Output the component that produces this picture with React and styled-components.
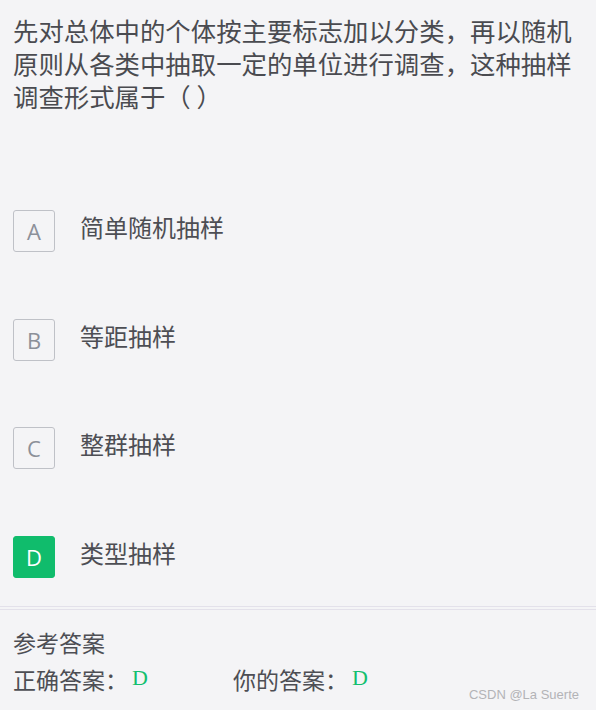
import styled, { createGlobalStyle } from "styled-components";

const GlobalStyle = createGlobalStyle`
  html, body {
    margin: 0;
    padding: 0;
    background: #f4f4f6;
  }
  body {
    font-family: "Noto Sans CJK SC", "Noto Sans", sans-serif;
  }
`;

const Page = styled.div`
  position: relative;
  width: 596px;
  height: 710px;
  background: #f4f4f6;
  overflow: hidden;
`;

const Question = styled.div`
  padding: 14px 13px 0 13px;
  font-size: 25.4px;
  line-height: 33px;
  color: #4a4b50;
`;

const Options = styled.div`
  display: flex;
  flex-direction: column;
  gap: 66.7px;
  padding: 97px 0 0 13px;
`;

const Option = styled.div`
  display: flex;
  align-items: center;
  height: 42px;
  gap: 25px;
`;

const Letter = styled.div`
  box-sizing: border-box;
  width: 42px;
  height: 42px;
  display: flex;
  align-items: center;
  justify-content: center;
  border-radius: 3px;
  border: 1px solid ${(p) => (p.$selected ? "#10bc6c" : "#bfc1c7")};
  background: ${(p) => (p.$selected ? "#10bc6c" : "transparent")};
  color: ${(p) => (p.$selected ? "#ffffff" : "#8c9099")};
  font-family: "Open Sans", "Noto Sans", sans-serif;
  font-size: 22px;
  line-height: 1;
`;

const OptionText = styled.div`
  font-size: 24px;
  line-height: 32px;
  padding-bottom: 8px;
  color: #4d4e54;
`;

const Divider = styled.div`
  margin-top: 28px;
  height: 2px;
  border-top: 1px solid #e3e1ea;
  border-bottom: 1px solid #e3e1ea;
`;

const Footer = styled.div`
  padding: 14px 13px 0 13px;
  color: #4d4e54;
`;

const FooterTitle = styled.div`
  font-size: 23px;
  line-height: 37px;
`;

const AnswerRow = styled.div`
  display: flex;
  font-size: 23px;
  line-height: 37px;
`;

const AnswerItem = styled.div`
  width: 220px;
  display: flex;
  align-items: baseline;
`;

const AnswerValue = styled.span`
  margin-left: 4px;
  font-family: "Liberation Serif", serif;
  font-size: 22px;
  color: #12bf6f;
  position: relative;
  top: -4px;
`;

const Watermark = styled.div`
  position: absolute;
  right: 17px;
  bottom: 8px;
  font-family: "Liberation Sans", Arial, sans-serif;
  font-size: 13px;
  color: #b3b3b6;
`;

const options = [
  { key: "A", text: "简单随机抽样" },
  { key: "B", text: "等距抽样" },
  { key: "C", text: "整群抽样" },
  { key: "D", text: "类型抽样", selected: true },
];

export default function App() {
  return (
    <Page>
      <GlobalStyle />
      <Question>
        先对总体中的个体按主要标志加以分类，再以随机原则从各类中抽取一定的单位进行调查，这种抽样调查形式属于（ ）
      </Question>
      <Options>
        {options.map((o) => (
          <Option key={o.key}>
            <Letter $selected={o.selected}>{o.key}</Letter>
            <OptionText>{o.text}</OptionText>
          </Option>
        ))}
      </Options>
      <Divider />
      <Footer>
        <FooterTitle>参考答案</FooterTitle>
        <AnswerRow>
          <AnswerItem>
            正确答案：<AnswerValue>D</AnswerValue>
          </AnswerItem>
          <AnswerItem>
            你的答案：<AnswerValue>D</AnswerValue>
          </AnswerItem>
        </AnswerRow>
      </Footer>
      <Watermark>CSDN @La Suerte</Watermark>
    </Page>
  );
}
